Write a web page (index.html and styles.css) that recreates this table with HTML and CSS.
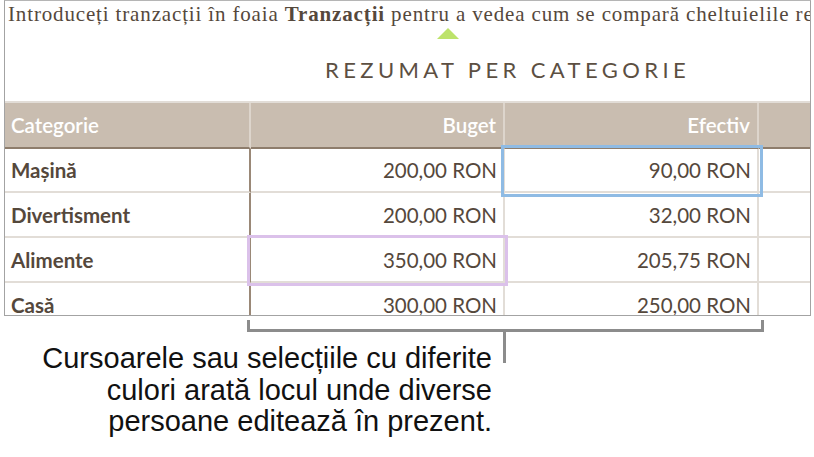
FILE: index.html
```html
<!DOCTYPE html>
<html lang="ro">
<head>
<meta charset="utf-8">
<title>Rezumat per categorie</title>
<link rel="stylesheet" href="styles.css">
</head>
<body>
<div class="frame">
  <p class="intro">Introduceți tranzacții în foaia <b>Tranzacții</b> pentru a vedea cum se compară cheltuielile reale cu bugetul.</p>
  <span class="cursor-mark"></span>
  <h1 class="title">REZUMAT PER CATEGORIE</h1>
  <div class="table">
    <div class="hcell first">Categorie</div>
    <div class="hcell num">Buget</div>
    <div class="hcell num">Efectiv</div>
    <div class="hcell last"></div>

    <div class="cell first">Mașină</div>
    <div class="cell num">200,00 RON</div>
    <div class="cell num">90,00 RON</div>
    <div class="cell last"></div>

    <div class="cell first">Divertisment</div>
    <div class="cell num">200,00 RON</div>
    <div class="cell num">32,00 RON</div>
    <div class="cell last"></div>

    <div class="cell first">Alimente</div>
    <div class="cell num">350,00 RON</div>
    <div class="cell num">205,75 RON</div>
    <div class="cell last"></div>

    <div class="cell first">Casă</div>
    <div class="cell num">300,00 RON</div>
    <div class="cell num">250,00 RON</div>
    <div class="cell last"></div>
  </div>
  <span class="sel sel-blue"></span>
  <span class="sel sel-purple"></span>
</div>
<div class="bracket-area">
  <div class="bracket"></div>
  <div class="tick"></div>
</div>
<p class="caption">Cursoarele sau selecțiile cu diferite<br>culori arată locul unde diverse<br>persoane editează în prezent.</p>
</body>
</html>
```

FILE: styles.css
```css
html, body {
  margin: 0;
  padding: 0;
  background: #ffffff;
}
body {
  width: 814px;
  height: 457px;
  overflow: hidden;
  position: relative;
}
.frame {
  position: relative;
  margin-left: 4px;
  width: 805px;
  height: 314px;
  border: 1px solid #a3a3a3;
  border-top-color: #b5b5b5;
  overflow: hidden;
}
.intro {
  margin: 0;
  padding-left: 3px;
  font-family: "Liberation Serif", "Times New Roman", serif;
  font-size: 21px;
  letter-spacing: 0.85px;
  line-height: 26px;
  color: #55483c;
  white-space: nowrap;
}
.intro b {
  font-weight: bold;
}
.cursor-mark {
  position: absolute;
  left: 432px;
  top: 27px;
  width: 0;
  height: 0;
  border-left: 11px solid transparent;
  border-right: 11px solid transparent;
  border-bottom: 11px solid #bde36b;
}
.title {
  margin: 29px 0 0 320px;
  font-family: Lato, "Noto Sans", sans-serif;
  font-weight: normal;
  font-size: 22px;
  line-height: 28px;
  letter-spacing: 4.4px;
  color: #5c4f42;
  white-space: nowrap;
}
.table {
  margin-top: 17px;
  display: grid;
  grid-template-columns: 246px 254px 254px 254px;
  grid-template-rows: 46px 44px 45px 45px 45px;
  width: 1008px;
  border-top: 2px solid #e2ddd7;
  font-family: Lato, "Noto Sans", sans-serif;
  font-size: 20.5px;
}
.hcell {
  background: #c9bdb0;
  color: #ffffff;
  font-weight: 600;
  display: flex;
  align-items: center;
  padding: 0 7px 0 6px;
  border-right: 2px solid #ddd5cc;
  border-bottom: 2px solid #8e7d6c;
}
.cell {
  display: flex;
  align-items: center;
  padding: 0 6px 0 6px;
  color: #55483c;
  border-right: 2px solid #e2ddd7;
  border-bottom: 2px solid #e2ddd7;
}
.cell.first {
  font-weight: bold;
  border-right-color: #9a8877;
}
.num {
  justify-content: flex-end;
}
.sel {
  position: absolute;
  box-sizing: border-box;
  border: 3px solid;
}
.sel-blue {
  left: 496px;
  top: 144px;
  width: 262px;
  height: 52px;
  border-color: #8fbbe4;
}
.sel-purple {
  left: 242px;
  top: 234px;
  width: 261px;
  height: 51px;
  border-color: #dbc1ea;
}
.bracket-area {
  position: relative;
  height: 46px;
  margin-top: 4px;
}
.bracket {
  margin-left: 247px;
  width: 511px;
  height: 9px;
  border: 3px solid #8c8c8c;
  border-top: none;
}
.tick {
  margin-left: 503px;
  width: 3px;
  height: 31px;
  background: #8c8c8c;
}
.caption {
  margin: -23px 0 0 0;
  width: 492px;
  text-align: right;
  font-family: "Liberation Sans", Arial, sans-serif;
  font-size: 29px;
  line-height: 31.5px;
  color: #111111;
}
```
